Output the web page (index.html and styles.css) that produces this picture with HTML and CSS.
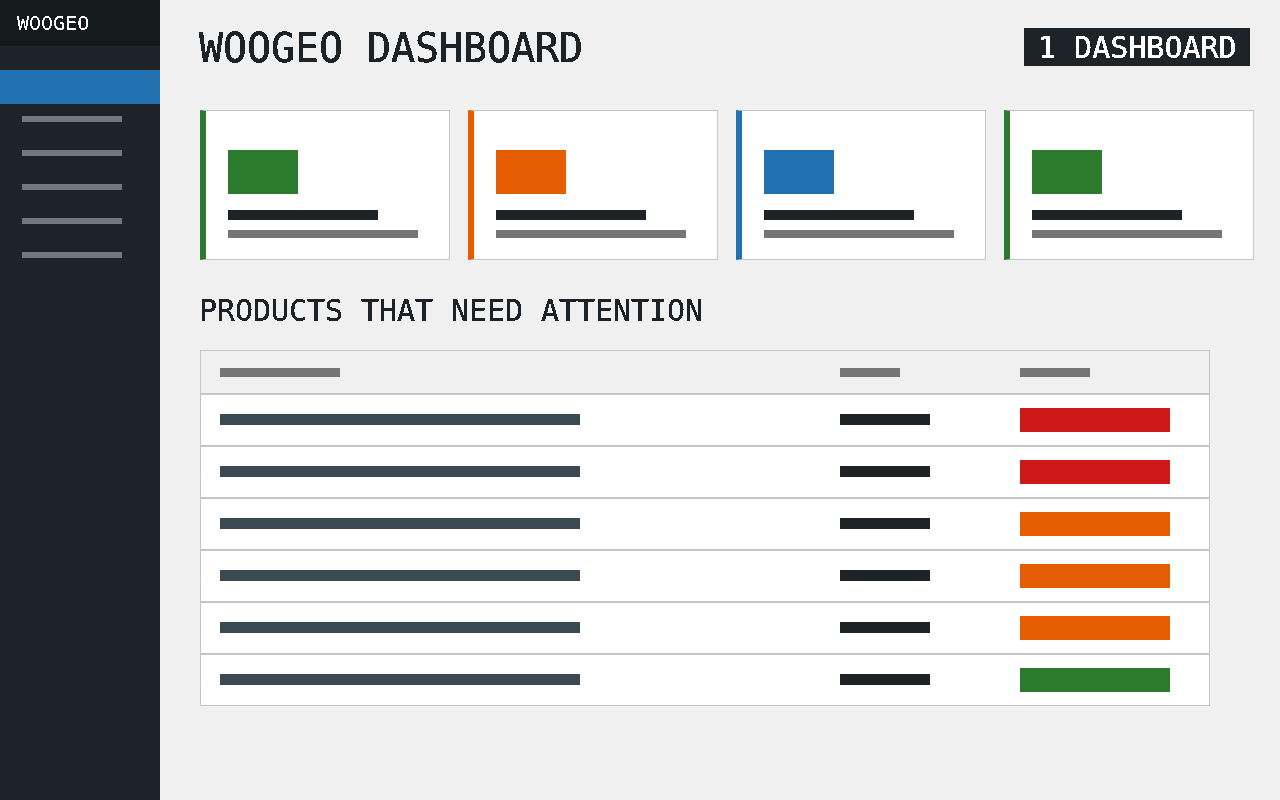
FILE: index.html
```html
<!DOCTYPE html>
<html lang="en">
<head>
  <meta charset="UTF-8" />
  <meta name="viewport" content="width=device-width, initial-scale=1.0"/>
  <title>WooGeo Dashboard</title>
  <link rel="stylesheet" href="styles.css">
</head>
<body>
  <!-- hard alpha edges, the headings have no anti-aliasing -->
  <svg class="defs" width="0" height="0" aria-hidden="true">
    <filter id="crisp" x="0" y="0" width="100%" height="100%" color-interpolation-filters="sRGB">
      <feComponentTransfer>
        <feFuncA type="discrete" tableValues="0 1"/>
      </feComponentTransfer>
    </filter>
  </svg>

  <aside class="sidebar">
    <div class="brand"><span class="pixel">WOOGEO</span></div>
    <nav class="nav">
      <div class="nav-item active"></div>
      <div class="nav-item"><span class="bar nav-bar"></span></div>
      <div class="nav-item"><span class="bar nav-bar"></span></div>
      <div class="nav-item"><span class="bar nav-bar"></span></div>
      <div class="nav-item"><span class="bar nav-bar"></span></div>
      <div class="nav-item"><span class="bar nav-bar"></span></div>
    </nav>
  </aside>

  <main class="main">
    <header class="page-header">
      <h1 class="pixel">WOOGEO DASHBOARD</h1>
      <div class="badge"><span class="pixel">1 DASHBOARD</span></div>
    </header>

    <section class="cards">
      <div class="card green">
        <span class="card-icon"></span>
        <span class="bar card-title"></span>
        <span class="bar card-text"></span>
      </div>
      <div class="card orange">
        <span class="card-icon"></span>
        <span class="bar card-title"></span>
        <span class="bar card-text"></span>
      </div>
      <div class="card blue">
        <span class="card-icon"></span>
        <span class="bar card-title"></span>
        <span class="bar card-text"></span>
      </div>
      <div class="card green">
        <span class="card-icon"></span>
        <span class="bar card-title"></span>
        <span class="bar card-text"></span>
      </div>
    </section>

    <h2 class="pixel">PRODUCTS THAT NEED ATTENTION</h2>

    <section class="table">
      <div class="table-head">
        <div class="col-name"><span class="bar head-bar head-name"></span></div>
        <div class="col-stock"><span class="bar head-bar head-stock"></span></div>
        <div class="col-status"><span class="bar head-bar head-status"></span></div>
      </div>
      <div class="table-row">
        <div class="col-name"><span class="bar row-name"></span></div>
        <div class="col-stock"><span class="bar row-stock"></span></div>
        <div class="col-status"><span class="status red"></span></div>
      </div>
      <div class="table-row">
        <div class="col-name"><span class="bar row-name"></span></div>
        <div class="col-stock"><span class="bar row-stock"></span></div>
        <div class="col-status"><span class="status red"></span></div>
      </div>
      <div class="table-row">
        <div class="col-name"><span class="bar row-name"></span></div>
        <div class="col-stock"><span class="bar row-stock"></span></div>
        <div class="col-status"><span class="status orange"></span></div>
      </div>
      <div class="table-row">
        <div class="col-name"><span class="bar row-name"></span></div>
        <div class="col-stock"><span class="bar row-stock"></span></div>
        <div class="col-status"><span class="status orange"></span></div>
      </div>
      <div class="table-row">
        <div class="col-name"><span class="bar row-name"></span></div>
        <div class="col-stock"><span class="bar row-stock"></span></div>
        <div class="col-status"><span class="status orange"></span></div>
      </div>
      <div class="table-row">
        <div class="col-name"><span class="bar row-name"></span></div>
        <div class="col-stock"><span class="bar row-stock"></span></div>
        <div class="col-status"><span class="status green"></span></div>
      </div>
    </section>
  </main>
</body>
</html>
```

FILE: styles.css
```css
*, *::before, *::after {
  box-sizing: border-box;
}

html, body {
  margin: 0;
  padding: 0;
  height: 100%;
  overflow: hidden;
}

body {
  display: flex;
  font-family: "DejaVu Sans Mono", monospace;
  background-color: #f0f0f0;
  color: #1d2327;
}

.defs {
  position: absolute;
}

.pixel {
  display: block;
  filter: url(#crisp);
}

.bar {
  display: block;
}

/* sidebar */
.sidebar {
  width: 160px;
  flex-shrink: 0;
  background-color: #1d2327;
}

.brand {
  height: 46px;
  padding-left: 17px;
  background-color: #151a1d;
  color: #ffffff;
  font-size: 20px;
  line-height: 46px;
}

.nav {
  padding-top: 24px;
}

.nav-item {
  height: 34px;
  padding: 12px 0 0 22px;
}

.nav-item.active {
  background-color: #2271b1;
}

.nav-bar {
  width: 100px;
  height: 6px;
  background-color: #72777b;
}

/* main column */
.main {
  flex: 1;
  min-width: 0;
  padding: 28px 30px 0 40px;
}

.page-header {
  display: flex;
  justify-content: space-between;
  height: 38px;
}

h1 {
  margin: 0 0 0 -1px;
  font-size: 40px;
  font-weight: normal;
  line-height: 40px;
  letter-spacing: -0.08px;
  -webkit-text-stroke: 0.4px #1d2327;
}

.badge {
  width: 226px;
  height: 38px;
  padding-left: 14px;
  background-color: #1d2327;
  color: #ffffff;
  font-size: 30px;
  line-height: 40px;
  -webkit-text-stroke: 0.3px #ffffff;
}

/* summary cards */
.cards {
  display: grid;
  grid-template-columns: repeat(4, 250px);
  gap: 18px;
  margin-top: 44px;
}

.card {
  height: 150px;
  padding: 39px 0 0 22px;
  background-color: #ffffff;
  border: 1px solid #c3c4c7;
  border-left-width: 6px;
}

.card.green { border-left-color: #2c7a2c; }
.card.orange { border-left-color: #e65c00; }
.card.blue { border-left-color: #2271b1; }

.card-icon {
  display: block;
  width: 70px;
  height: 44px;
}

.card.green .card-icon { background-color: #2c7a2c; }
.card.orange .card-icon { background-color: #e65c00; }
.card.blue .card-icon { background-color: #2271b1; }

.card-title {
  width: 150px;
  height: 10px;
  margin-top: 16px;
  background-color: #1d2327;
}

.card-text {
  width: 190px;
  height: 8px;
  margin-top: 10px;
  background-color: #757575;
}

h2 {
  margin: 32px 0 0 -1px;
  font-size: 30px;
  font-weight: normal;
  line-height: 38px;
  letter-spacing: -0.06px;
  -webkit-text-stroke: 0.3px #1d2327;
}

/* products table */
.table {
  width: 1010px;
  margin-top: 20px;
  border: 1px solid #c3c4c7;
  background-color: #ffffff;
}

.table-head,
.table-row {
  display: flex;
  align-items: center;
  padding-left: 19px;
}

.table-head {
  height: 44px;
  background-color: #f0f0f0;
  border-bottom: 2px solid #c3c4c7;
}

.table-row {
  height: 52px;
  border-bottom: 2px solid #c3c4c7;
}

.table-row:last-child {
  height: 50px;
  border-bottom: none;
}

.col-name { width: 620px; }
.col-stock { width: 180px; }

.head-bar {
  height: 9px;
  background-color: #757575;
}

.head-name { width: 120px; }
.head-stock { width: 60px; }
.head-status { width: 70px; }

.row-name,
.row-stock {
  height: 11px;
  margin-bottom: 1px;
}

.row-name {
  width: 360px;
  background-color: #3c4a54;
}

.row-stock {
  width: 90px;
  background-color: #1d2327;
}

.status {
  display: block;
  width: 150px;
  height: 24px;
}

.status.red { background-color: #cc1818; }
.status.orange { background-color: #e65c00; }
.status.green { background-color: #2c7a2c; }
```
